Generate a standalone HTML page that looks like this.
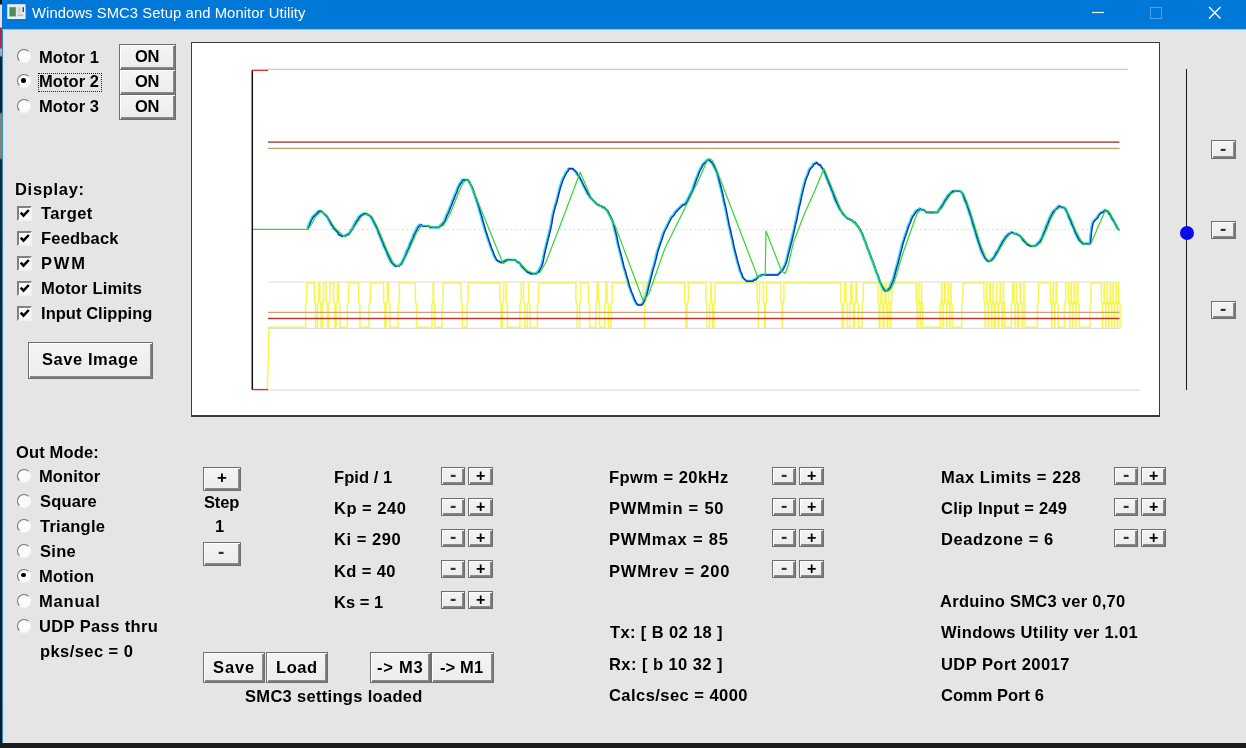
<!DOCTYPE html>
<html><head><meta charset="utf-8"><title>Windows SMC3 Setup and Monitor Utility</title>
<style>
html,body{margin:0;padding:0;}
body{width:1246px;height:748px;overflow:hidden;background:#15171a;position:relative;
 font-family:"Liberation Sans",sans-serif;font-weight:bold;font-size:16px;color:#000;}
.abs{position:absolute;}
#desk{position:absolute;left:0;top:0;width:1246px;height:748px;
 background:linear-gradient(180deg,#101418 0,#101418 4px,#ecdfe2 5px,#ecdfe2 27px,#b02838 28px,#b83040 48px,#b0b0b0 49px,#a0a0a0 56px,#15202a 57px,#15202a 112px,#8a8260 114px,#8a8260 158px,#1a2630 160px,#101820 748px);}
#deskb{position:absolute;left:0;top:743px;width:1246px;height:5px;background:#1b1c1e;}
#win{position:absolute;left:2px;top:0;width:1244px;height:743px;background:#e5e5e5;border-left:1px solid #2a8ae0;box-sizing:border-box;}
#tb{position:absolute;left:2px;top:0;width:1244px;height:29px;background:#0078d7;}
#tbl{position:absolute;left:2px;top:29px;width:1244px;height:1px;background:#7fc4f4;}
#title{position:absolute;will-change:transform;left:32px;top:3px;font-weight:normal;font-size:15.3px;color:#fff;white-space:nowrap;line-height:19px;letter-spacing:-0.05px;}
.t{position:absolute;will-change:transform;white-space:nowrap;line-height:18px;height:18px;font-size:16px;letter-spacing:0px;}
.btn{position:absolute;box-sizing:border-box;border:1px solid #6f6f6f;background:linear-gradient(180deg,#f4f4f4,#ececec);
 box-shadow:inset 1px 1px 0 #ffffff, inset -1px -1px 0 #7a7a7a, inset -2px -2px 0 #8a8a8a;
 text-align:center;white-space:nowrap;}
.btn span{position:relative;display:inline-block;}
.sb{width:25px;height:18px;font-size:13px;line-height:14px;}
.rad{position:absolute;width:14px;height:14px;border-radius:50%;box-sizing:border-box;background:#fbfbfb;
 border:1.8px solid;border-color:#747474 #f6f6f6 #f6f6f6 #747474;}
.rad.on::after{content:"";position:absolute;left:3px;top:3px;width:4.4px;height:4.4px;border-radius:50%;background:#000;}
.chk{position:absolute;width:15px;height:15px;box-sizing:border-box;background:#fafafa;border:2px solid;border-color:#808080 #f2f2f2 #f2f2f2 #808080;}
.chk svg{position:absolute;left:0;top:0;}
#panel{position:absolute;left:191px;top:42px;width:969px;height:375px;box-sizing:border-box;background:#fff;border:1.5px solid #3a3a3a;border-bottom-width:2px;}
.chart{position:absolute;left:192px;top:43px;}
</style></head>
<body>
<div id="desk"></div><div id="deskb"></div>
<div id="win"></div>
<div id="tb"></div><div id="tbl"></div>
<svg class="abs" style="left:7px;top:4px" width="20" height="16" viewBox="0 0 20 16"><rect x="0.9" y="0.9" width="17" height="13.4" fill="#e4e8ea" stroke="#fbfdfd" stroke-width="1.2"/><rect x="2.4" y="3.2" width="6.4" height="9.2" fill="#4f8a5c"/><rect x="10.4" y="3.4" width="3.6" height="5.6" fill="#cfd6dc"/><rect x="15.6" y="3.2" width="1.3" height="4.8" fill="#28304a"/><rect x="10.4" y="10.6" width="5.6" height="1.1" fill="#c8a0a0"/></svg>
<div class="t" style="left:32.30px;top:3.87px;font-size:14.8px;letter-spacing:0.077px;color:#fff;font-weight:normal;">Windows SMC3 Setup and Monitor Utility</div>
<svg class="abs" style="left:1080px;top:0" width="166" height="29" viewBox="1080 0 166 29"><line x1="1092" y1="12.5" x2="1104" y2="12.5" stroke="#fff" stroke-width="1.2"/><rect x="1150.5" y="7.5" width="11" height="11" fill="none" stroke="#4aa0e6" stroke-width="1.1"/><path d="M1209 7 L1220.5 18.5 M1220.5 7 L1209 18.5" stroke="#fff" stroke-width="1.4" fill="none"/></svg>
<div class="rad" style="left:17.2px;top:49.3px"></div>
<div class="t" style="left:38.95px;top:47.88px;font-size:16.5px;letter-spacing:0.047px;">Motor 1</div>
<div class="btn " style="left:119.3px;top:44px;width:56.3px;height:25.6px;font-size:16.5px;line-height:21.6px;"></div>
<div class="t" style="left:134.84px;top:46.68px;font-size:16.5px;letter-spacing:-0.400px;">ON</div>
<div class="rad on" style="left:17.2px;top:74.3px"></div>
<div class="t" style="left:38.95px;top:72.48px;font-size:16.5px;letter-spacing:0.075px;">Motor 2</div>
<div class="btn " style="left:119.3px;top:69px;width:56.3px;height:25.6px;font-size:16.5px;line-height:21.6px;"></div>
<div class="t" style="left:134.84px;top:71.68px;font-size:16.5px;letter-spacing:-0.400px;">ON</div>
<div class="rad" style="left:17.2px;top:99.3px"></div>
<div class="t" style="left:38.95px;top:97.08px;font-size:16.5px;letter-spacing:0.075px;">Motor 3</div>
<div class="btn " style="left:119.3px;top:94px;width:56.3px;height:25.6px;font-size:16.5px;line-height:21.6px;"></div>
<div class="t" style="left:134.84px;top:96.68px;font-size:16.5px;letter-spacing:-0.400px;">ON</div>
<div class="abs" style="left:38px;top:73px;width:63.5px;height:18.5px;border:1px dotted #222;box-sizing:border-box"></div>
<div class="t" style="left:14.85px;top:180.48px;font-size:16.5px;letter-spacing:0.694px;">Display:</div>
<div class="chk" style="left:16.7px;top:206.2px"><svg width="11" height="11" viewBox="0 0 11 11"><path d="M1.7 4.6 L4.5 7.6 L9.8 2.0" fill="none" stroke="#000" stroke-width="2.5"/></svg></div>
<div class="t" style="left:40.94px;top:204.08px;font-size:16.5px;letter-spacing:0.412px;">Target</div>
<div class="chk" style="left:16.7px;top:231.2px"><svg width="11" height="11" viewBox="0 0 11 11"><path d="M1.7 4.6 L4.5 7.6 L9.8 2.0" fill="none" stroke="#000" stroke-width="2.5"/></svg></div>
<div class="t" style="left:40.55px;top:229.08px;font-size:16.5px;letter-spacing:0.189px;">Feedback</div>
<div class="chk" style="left:16.7px;top:256.2px"><svg width="11" height="11" viewBox="0 0 11 11"><path d="M1.7 4.6 L4.5 7.6 L9.8 2.0" fill="none" stroke="#000" stroke-width="2.5"/></svg></div>
<div class="t" style="left:40.55px;top:254.08px;font-size:16.5px;letter-spacing:1.793px;">PWM</div>
<div class="chk" style="left:16.7px;top:281.2px"><svg width="11" height="11" viewBox="0 0 11 11"><path d="M1.7 4.6 L4.5 7.6 L9.8 2.0" fill="none" stroke="#000" stroke-width="2.5"/></svg></div>
<div class="t" style="left:40.55px;top:279.08px;font-size:16.5px;letter-spacing:0.165px;">Motor Limits</div>
<div class="chk" style="left:16.7px;top:306.2px"><svg width="11" height="11" viewBox="0 0 11 11"><path d="M1.7 4.6 L4.5 7.6 L9.8 2.0" fill="none" stroke="#000" stroke-width="2.5"/></svg></div>
<div class="t" style="left:40.55px;top:304.08px;font-size:16.5px;letter-spacing:0.041px;">Input Clipping</div>
<div class="btn " style="left:28px;top:342px;width:125px;height:37px;font-size:16.5px;line-height:33px;"></div>
<div class="t" style="left:41.91px;top:349.88px;font-size:16.5px;letter-spacing:0.560px;">Save Image</div>
<div class="t" style="left:16.04px;top:442.68px;font-size:16.5px;letter-spacing:0.154px;">Out Mode:</div>
<div class="rad" style="left:17.4px;top:468.5px"></div>
<div class="t" style="left:39.05px;top:466.58px;font-size:16.5px;letter-spacing:0.111px;">Monitor</div>
<div class="rad" style="left:17.4px;top:493.5px"></div>
<div class="t" style="left:39.71px;top:491.58px;font-size:16.5px;letter-spacing:0.164px;">Square</div>
<div class="rad" style="left:17.4px;top:518.5px"></div>
<div class="t" style="left:40.04px;top:516.58px;font-size:16.5px;letter-spacing:0.238px;">Triangle</div>
<div class="rad" style="left:17.4px;top:543.5px"></div>
<div class="t" style="left:39.71px;top:541.58px;font-size:16.5px;letter-spacing:0.292px;">Sine</div>
<div class="rad on" style="left:17.4px;top:568.5px"></div>
<div class="t" style="left:39.05px;top:566.58px;font-size:16.5px;letter-spacing:0.225px;">Motion</div>
<div class="rad" style="left:17.4px;top:593.5px"></div>
<div class="t" style="left:39.05px;top:591.58px;font-size:16.5px;letter-spacing:0.797px;">Manual</div>
<div class="rad" style="left:17.4px;top:618.5px"></div>
<div class="t" style="left:39.21px;top:616.58px;font-size:16.5px;letter-spacing:0.386px;">UDP Pass thru</div>
<div class="t" style="left:39.95px;top:642.28px;font-size:16.5px;letter-spacing:0.431px;">pks/sec = 0</div>
<div class="btn " style="left:203.2px;top:467px;width:37.5px;height:24px;font-size:15px;line-height:20px;"><span style="top:-1px"></span></div>
<div class="t" style="left:216.57px;top:469.10px;font-size:17px;color:#000">+</div>
<div class="t" style="left:203.50px;top:492.88px;font-size:16.5px;letter-spacing:-0.183px;">Step</div>
<div class="t" style="left:214.51px;top:517.28px;font-size:16.5px;letter-spacing:0.000px;">1</div>
<div class="btn " style="left:203.2px;top:542.3px;width:37.5px;height:24px;font-size:15px;line-height:20px;"><span style="top:-1px"></span></div>
<div class="t" style="left:218.37px;top:542.86px;font-size:19px;color:#333">-</div>
<div class="t" style="left:333.85px;top:467.98px;font-size:16.5px;letter-spacing:0.057px;">Fpid / 1</div>
<div class="btn " style="left:440.8px;top:467px;width:24.6px;height:18px;font-size:13px;line-height:14px;"><span style="top:-3px"></span></div>
<div class="btn " style="left:468.1px;top:467px;width:24.8px;height:18px;font-size:13px;line-height:14px;"><span style="top:-3px"></span></div>
<div class="t" style="left:449.87px;top:466.26px;font-size:19px;color:#333">-</div>
<div class="t" style="left:475.86px;top:467.32px;font-size:16px;color:#000">+</div>
<div class="t" style="left:333.85px;top:499.23px;font-size:16.5px;letter-spacing:0.515px;">Kp = 240</div>
<div class="btn " style="left:440.8px;top:498px;width:24.6px;height:18px;font-size:13px;line-height:14px;"><span style="top:-3px"></span></div>
<div class="btn " style="left:468.1px;top:498px;width:24.8px;height:18px;font-size:13px;line-height:14px;"><span style="top:-3px"></span></div>
<div class="t" style="left:449.87px;top:497.26px;font-size:19px;color:#333">-</div>
<div class="t" style="left:475.86px;top:498.32px;font-size:16px;color:#000">+</div>
<div class="t" style="left:333.85px;top:530.48px;font-size:16.5px;letter-spacing:0.564px;">Ki = 290</div>
<div class="btn " style="left:440.8px;top:529px;width:24.6px;height:18px;font-size:13px;line-height:14px;"><span style="top:-3px"></span></div>
<div class="btn " style="left:468.1px;top:529px;width:24.8px;height:18px;font-size:13px;line-height:14px;"><span style="top:-3px"></span></div>
<div class="t" style="left:449.87px;top:528.26px;font-size:19px;color:#333">-</div>
<div class="t" style="left:475.86px;top:529.32px;font-size:16px;color:#000">+</div>
<div class="t" style="left:333.85px;top:561.73px;font-size:16.5px;letter-spacing:0.397px;">Kd = 40</div>
<div class="btn " style="left:440.8px;top:560px;width:24.6px;height:18px;font-size:13px;line-height:14px;"><span style="top:-3px"></span></div>
<div class="btn " style="left:468.1px;top:560px;width:24.8px;height:18px;font-size:13px;line-height:14px;"><span style="top:-3px"></span></div>
<div class="t" style="left:449.87px;top:559.26px;font-size:19px;color:#333">-</div>
<div class="t" style="left:475.86px;top:560.32px;font-size:16px;color:#000">+</div>
<div class="t" style="left:333.85px;top:592.98px;font-size:16.5px;letter-spacing:-0.004px;">Ks = 1</div>
<div class="btn " style="left:440.8px;top:591px;width:24.6px;height:18px;font-size:13px;line-height:14px;"><span style="top:-3px"></span></div>
<div class="btn " style="left:468.1px;top:591px;width:24.8px;height:18px;font-size:13px;line-height:14px;"><span style="top:-3px"></span></div>
<div class="t" style="left:449.87px;top:590.26px;font-size:19px;color:#333">-</div>
<div class="t" style="left:475.86px;top:591.32px;font-size:16px;color:#000">+</div>
<div class="t" style="left:608.85px;top:467.98px;font-size:16.5px;letter-spacing:0.458px;">Fpwm = 20kHz</div>
<div class="btn " style="left:771.8px;top:467px;width:24.6px;height:18px;font-size:13px;line-height:14px;"><span style="top:-3px"></span></div>
<div class="btn " style="left:799.1px;top:467px;width:24.8px;height:18px;font-size:13px;line-height:14px;"><span style="top:-3px"></span></div>
<div class="t" style="left:780.87px;top:466.26px;font-size:19px;color:#333">-</div>
<div class="t" style="left:806.86px;top:467.32px;font-size:16px;color:#000">+</div>
<div class="t" style="left:608.85px;top:499.23px;font-size:16.5px;letter-spacing:0.769px;">PWMmin = 50</div>
<div class="btn " style="left:771.8px;top:498px;width:24.6px;height:18px;font-size:13px;line-height:14px;"><span style="top:-3px"></span></div>
<div class="btn " style="left:799.1px;top:498px;width:24.8px;height:18px;font-size:13px;line-height:14px;"><span style="top:-3px"></span></div>
<div class="t" style="left:780.87px;top:497.26px;font-size:19px;color:#333">-</div>
<div class="t" style="left:806.86px;top:498.32px;font-size:16px;color:#000">+</div>
<div class="t" style="left:608.85px;top:530.48px;font-size:16.5px;letter-spacing:0.850px;">PWMmax = 85</div>
<div class="btn " style="left:771.8px;top:529px;width:24.6px;height:18px;font-size:13px;line-height:14px;"><span style="top:-3px"></span></div>
<div class="btn " style="left:799.1px;top:529px;width:24.8px;height:18px;font-size:13px;line-height:14px;"><span style="top:-3px"></span></div>
<div class="t" style="left:780.87px;top:528.26px;font-size:19px;color:#333">-</div>
<div class="t" style="left:806.86px;top:529.32px;font-size:16px;color:#000">+</div>
<div class="t" style="left:608.85px;top:561.73px;font-size:16.5px;letter-spacing:0.816px;">PWMrev = 200</div>
<div class="btn " style="left:771.8px;top:560px;width:24.6px;height:18px;font-size:13px;line-height:14px;"><span style="top:-3px"></span></div>
<div class="btn " style="left:799.1px;top:560px;width:24.8px;height:18px;font-size:13px;line-height:14px;"><span style="top:-3px"></span></div>
<div class="t" style="left:780.87px;top:559.26px;font-size:19px;color:#333">-</div>
<div class="t" style="left:806.86px;top:560.32px;font-size:16px;color:#000">+</div>
<div class="t" style="left:940.75px;top:467.98px;font-size:16.5px;letter-spacing:0.545px;">Max Limits = 228</div>
<div class="btn " style="left:1113.5px;top:467px;width:24.6px;height:18px;font-size:13px;line-height:14px;"><span style="top:-3px"></span></div>
<div class="btn " style="left:1140.8px;top:467px;width:24.8px;height:18px;font-size:13px;line-height:14px;"><span style="top:-3px"></span></div>
<div class="t" style="left:1122.57px;top:466.26px;font-size:19px;color:#333">-</div>
<div class="t" style="left:1148.56px;top:467.32px;font-size:16px;color:#000">+</div>
<div class="t" style="left:941.24px;top:499.23px;font-size:16.5px;letter-spacing:0.233px;">Clip Input = 249</div>
<div class="btn " style="left:1113.5px;top:498px;width:24.6px;height:18px;font-size:13px;line-height:14px;"><span style="top:-3px"></span></div>
<div class="btn " style="left:1140.8px;top:498px;width:24.8px;height:18px;font-size:13px;line-height:14px;"><span style="top:-3px"></span></div>
<div class="t" style="left:1122.57px;top:497.26px;font-size:19px;color:#333">-</div>
<div class="t" style="left:1148.56px;top:498.32px;font-size:16px;color:#000">+</div>
<div class="t" style="left:940.75px;top:530.48px;font-size:16.5px;letter-spacing:0.571px;">Deadzone = 6</div>
<div class="btn " style="left:1113.5px;top:529px;width:24.6px;height:18px;font-size:13px;line-height:14px;"><span style="top:-3px"></span></div>
<div class="btn " style="left:1140.8px;top:529px;width:24.8px;height:18px;font-size:13px;line-height:14px;"><span style="top:-3px"></span></div>
<div class="t" style="left:1122.57px;top:528.26px;font-size:19px;color:#333">-</div>
<div class="t" style="left:1148.56px;top:529.32px;font-size:16px;color:#000">+</div>
<div class="t" style="left:609.84px;top:623.48px;font-size:16.5px;letter-spacing:0.374px;">Tx: [ B 02 18 ]</div>
<div class="t" style="left:608.85px;top:654.88px;font-size:16.5px;letter-spacing:0.445px;">Rx: [ b 10 32 ]</div>
<div class="t" style="left:609.34px;top:686.48px;font-size:16.5px;letter-spacing:0.457px;">Calcs/sec = 4000</div>
<div class="t" style="left:940.40px;top:592.28px;font-size:16.5px;letter-spacing:0.270px;">Arduino SMC3 ver 0,70</div>
<div class="t" style="left:940.90px;top:623.48px;font-size:16.5px;letter-spacing:0.345px;">Windows Utility ver 1.01</div>
<div class="t" style="left:940.91px;top:654.88px;font-size:16.5px;letter-spacing:0.448px;">UDP Port 20017</div>
<div class="t" style="left:941.24px;top:686.48px;font-size:16.5px;letter-spacing:0.022px;">Comm Port 6</div>
<div class="btn " style="left:203px;top:652px;width:62px;height:31px;font-size:16.5px;line-height:27px;"></div>
<div class="t" style="left:213.00px;top:658.28px;font-size:16.5px;letter-spacing:0.882px;">Save</div>
<div class="btn " style="left:265.5px;top:652px;width:62px;height:31px;font-size:16.5px;line-height:27px;"></div>
<div class="t" style="left:276.05px;top:658.28px;font-size:16.5px;letter-spacing:0.570px;">Load</div>
<div class="btn " style="left:369.6px;top:652px;width:61.5px;height:31px;font-size:16.5px;line-height:27px;"></div>
<div class="t" style="left:377.14px;top:658.28px;font-size:16.5px;letter-spacing:0.771px;">-&gt; M3</div>
<div class="btn " style="left:431.3px;top:652px;width:63px;height:31px;font-size:16.5px;line-height:27px;"></div>
<div class="t" style="left:440.34px;top:658.28px;font-size:16.5px;letter-spacing:0.130px;">-&gt; M1</div>
<div class="t" style="left:244.60px;top:686.58px;font-size:16.5px;letter-spacing:0.313px;">SMC3 settings loaded</div>
<div id="panel"></div>
<svg class="chart" width="966" height="372" viewBox="192 43 966 372">
<g stroke="#dcdcdc" stroke-width="1.2" fill="none">
<line x1="268" y1="69.3" x2="1128" y2="69.3" stroke="#c8c8c8"/>
<line x1="268" y1="282" x2="1119.5" y2="282"/>
<line x1="268" y1="328.3" x2="1119.5" y2="328.3"/>
<line x1="268" y1="390.2" x2="1140" y2="390.2"/>
</g>
<line x1="308" y1="229.5" x2="1119.5" y2="229.5" stroke="#d8d8d8" stroke-width="1" stroke-dasharray="1.5 3"/>
<path d="M267.3,389.5 L268.3,360 L269,327.2 L305.6,327.2 L305.6,327.2 L305.6,305.0 L306.8,301.0 L306.8,283.0 L314.4,283.0 L314.4,301.0 L315.6,305.0 L315.6,327.2 L317.4,327.2 L317.4,305.0 L318.6,301.0 L318.6,283.0 L319.9,283.0 L319.9,301.0 L321.1,305.0 L321.1,327.2 L322.4,327.2 L322.4,305.0 L323.6,301.0 L323.6,283.0 L326.1,283.0 L326.1,301.0 L327.4,305.0 L327.4,327.2 L328.6,327.2 L328.6,305.0 L329.9,301.0 L329.9,283.0 L333.6,283.0 L333.6,301.0 L334.9,305.0 L334.9,327.2 L336.1,327.2 L336.1,305.0 L337.4,301.0 L337.4,283.0 L338.6,283.0 L338.6,301.0 L339.9,305.0 L339.9,327.2 L347.4,327.2 L347.4,305.0 L348.6,301.0 L348.6,283.0 L358.6,283.0 L358.6,301.0 L359.9,305.0 L359.9,327.2 L369.1,327.2 L369.1,305.0 L370.4,301.0 L370.4,283.0 L383.6,283.0 L383.6,301.0 L384.9,305.0 L384.9,327.2 L386.1,327.2 L386.1,305.0 L387.4,301.0 L387.4,283.0 L388.6,283.0 L388.6,301.0 L389.9,305.0 L389.9,327.2 L398.1,327.2 L398.1,305.0 L399.4,301.0 L399.4,283.0 L415.4,283.0 L415.4,301.0 L416.6,305.0 L416.6,327.2 L431.9,327.2 L431.9,305.0 L433.1,301.0 L433.1,283.0 L433.6,283.0 L433.6,301.0 L434.9,305.0 L434.9,327.2 L441.9,327.2 L441.9,305.0 L443.1,301.0 L443.1,283.0 L461.1,283.0 L461.1,301.0 L462.4,305.0 L462.4,327.2 L466.9,327.2 L466.9,305.0 L468.1,301.0 L468.1,283.0 L499.9,283.0 L499.9,301.0 L501.1,305.0 L501.1,327.2 L502.4,327.2 L502.4,305.0 L503.6,301.0 L503.6,283.0 L506.1,283.0 L506.1,301.0 L507.4,305.0 L507.4,327.2 L519.9,327.2 L519.9,305.0 L521.1,301.0 L521.1,283.0 L523.6,283.0 L523.6,301.0 L524.9,305.0 L524.9,327.2 L527.4,327.2 L527.4,305.0 L528.6,301.0 L528.6,283.0 L528.6,283.0 L528.6,301.0 L529.9,305.0 L529.9,327.2 L537.4,327.2 L537.4,305.0 L538.6,301.0 L538.6,283.0 L575.9,283.0 L575.9,301.0 L577.1,305.0 L577.1,327.2 L579.6,327.2 L579.6,305.0 L580.9,301.0 L580.9,283.0 L588.4,283.0 L588.4,301.0 L589.6,305.0 L589.6,327.2 L595.9,327.2 L595.9,305.0 L597.1,301.0 L597.1,283.0 L598.4,283.0 L598.4,301.0 L599.6,305.0 L599.6,327.2 L604.6,327.2 L604.6,305.0 L605.9,301.0 L605.9,283.0 L607.1,283.0 L607.1,301.0 L608.4,305.0 L608.4,327.2 L610.9,327.2 L610.9,305.0 L612.1,301.0 L612.1,283.0 L643.4,283.0 L643.4,301.0 L644.6,305.0 L644.6,327.2 L644.6,327.2 L644.6,305.0 L645.9,301.0 L645.9,283.0 L684.6,283.0 L684.6,301.0 L685.9,305.0 L685.9,327.2 L687.1,327.2 L687.1,305.0 L688.4,301.0 L688.4,283.0 L705.9,283.0 L705.9,301.0 L707.1,305.0 L707.1,327.2 L709.6,327.2 L709.6,305.0 L710.9,301.0 L710.9,283.0 L711.4,283.0 L711.4,301.0 L712.6,305.0 L712.6,327.2 L713.9,327.2 L713.9,305.0 L715.1,301.0 L715.1,283.0 L757.1,283.0 L757.1,301.0 L758.4,305.0 L758.4,327.2 L758.4,327.2 L758.4,305.0 L759.6,301.0 L759.6,283.0 L763.4,283.0 L763.4,301.0 L764.6,305.0 L764.6,327.2 L765.4,327.2 L765.4,305.0 L766.6,301.0 L766.6,283.0 L780.9,283.0 L780.9,301.0 L782.1,305.0 L782.1,327.2 L782.6,327.2 L782.6,305.0 L783.9,301.0 L783.9,283.0 L840.9,283.0 L840.9,301.0 L842.1,305.0 L842.1,327.2 L843.4,327.2 L843.4,305.0 L844.6,301.0 L844.6,283.0 L845.9,283.0 L845.9,301.0 L847.1,305.0 L847.1,327.2 L849.6,327.2 L849.6,305.0 L850.9,301.0 L850.9,283.0 L852.1,283.0 L852.1,301.0 L853.4,305.0 L853.4,327.2 L854.6,327.2 L854.6,305.0 L855.9,301.0 L855.9,283.0 L857.1,283.0 L857.1,301.0 L858.4,305.0 L858.4,327.2 L862.1,327.2 L862.1,305.0 L863.4,301.0 L863.4,283.0 L878.0,283.0 L878.0,301.0 L879.2,305.0 L879.2,327.2 L879.9,327.2 L879.9,305.0 L881.1,301.0 L881.1,283.0 L881.9,283.0 L881.9,301.0 L883.1,305.0 L883.1,327.2 L883.9,327.2 L883.9,305.0 L885.1,301.0 L885.1,283.0 L885.9,283.0 L885.9,301.0 L887.1,305.0 L887.1,327.2 L887.9,327.2 L887.9,305.0 L889.1,301.0 L889.1,283.0 L889.1,283.0 L889.1,301.0 L890.3,305.0 L890.3,327.2 L890.7,327.2 L890.7,305.0 L891.9,301.0 L891.9,283.0 L916.1,283.0 L916.1,301.0 L917.3,305.0 L917.3,327.2 L917.7,327.2 L917.7,305.0 L918.9,301.0 L918.9,283.0 L918.9,283.0 L918.9,301.0 L920.1,305.0 L920.1,327.2 L920.4,327.2 L920.4,305.0 L921.6,301.0 L921.6,283.0 L921.4,283.0 L921.4,301.0 L922.6,305.0 L922.6,327.2 L940.4,327.2 L940.4,305.0 L941.6,301.0 L941.6,283.0 L941.9,283.0 L941.9,301.0 L943.1,305.0 L943.1,327.2 L943.4,327.2 L943.4,305.0 L944.6,301.0 L944.6,283.0 L945.4,283.0 L945.4,301.0 L946.6,305.0 L946.6,327.2 L946.9,327.2 L946.9,305.0 L948.1,301.0 L948.1,283.0 L948.4,283.0 L948.4,301.0 L949.6,305.0 L949.6,327.2 L949.9,327.2 L949.9,305.0 L951.1,301.0 L951.1,283.0 L950.9,283.0 L950.9,301.0 L952.1,305.0 L952.1,327.2 L961.7,327.2 L961.7,305.0 L962.9,301.0 L962.9,283.0 L983.9,283.0 L983.9,301.0 L985.1,305.0 L985.1,327.2 L985.4,327.2 L985.4,305.0 L986.6,301.0 L986.6,283.0 L986.9,283.0 L986.9,301.0 L988.1,305.0 L988.1,327.2 L988.4,327.2 L988.4,305.0 L989.6,301.0 L989.6,283.0 L990.4,283.0 L990.4,301.0 L991.6,305.0 L991.6,327.2 L991.9,327.2 L991.9,305.0 L993.1,301.0 L993.1,283.0 L993.4,283.0 L993.4,301.0 L994.6,305.0 L994.6,327.2 L995.4,327.2 L995.4,305.0 L996.6,301.0 L996.6,283.0 L996.9,283.0 L996.9,301.0 L998.1,305.0 L998.1,327.2 L998.9,327.2 L998.9,305.0 L1000.1,301.0 L1000.1,283.0 L1000.9,283.0 L1000.9,301.0 L1002.1,305.0 L1002.1,327.2 L1002.4,327.2 L1002.4,305.0 L1003.6,301.0 L1003.6,283.0 L1003.4,283.0 L1003.4,301.0 L1004.6,305.0 L1004.6,327.2 L1011.4,327.2 L1011.4,305.0 L1012.6,301.0 L1012.6,283.0 L1013.9,283.0 L1013.9,301.0 L1015.1,305.0 L1015.1,327.2 L1015.4,327.2 L1015.4,305.0 L1016.6,301.0 L1016.6,283.0 L1016.4,283.0 L1016.4,301.0 L1017.6,305.0 L1017.6,327.2 L1018.9,327.2 L1018.9,305.0 L1020.1,301.0 L1020.1,283.0 L1020.9,283.0 L1020.9,301.0 L1022.1,305.0 L1022.1,327.2 L1022.9,327.2 L1022.9,305.0 L1024.1,301.0 L1024.1,283.0 L1023.9,283.0 L1023.9,301.0 L1025.1,305.0 L1025.1,327.2 L1037.4,327.2 L1037.4,305.0 L1038.6,301.0 L1038.6,283.0 L1050.4,283.0 L1050.4,301.0 L1051.6,305.0 L1051.6,327.2 L1051.9,327.2 L1051.9,305.0 L1053.1,301.0 L1053.1,283.0 L1053.4,283.0 L1053.4,301.0 L1054.6,305.0 L1054.6,327.2 L1054.9,327.2 L1054.9,305.0 L1056.1,301.0 L1056.1,283.0 L1056.9,283.0 L1056.9,301.0 L1058.1,305.0 L1058.1,327.2 L1064.4,327.2 L1064.4,305.0 L1065.6,301.0 L1065.6,283.0 L1068.4,283.0 L1068.4,301.0 L1069.6,305.0 L1069.6,327.2 L1069.9,327.2 L1069.9,305.0 L1071.1,301.0 L1071.1,283.0 L1071.4,283.0 L1071.4,301.0 L1072.6,305.0 L1072.6,327.2 L1072.9,327.2 L1072.9,305.0 L1074.1,301.0 L1074.1,283.0 L1074.4,283.0 L1074.4,301.0 L1075.6,305.0 L1075.6,327.2 L1075.9,327.2 L1075.9,305.0 L1077.1,301.0 L1077.1,283.0 L1077.9,283.0 L1077.9,301.0 L1079.1,305.0 L1079.1,327.2 L1089.9,327.2 L1089.9,305.0 L1091.1,301.0 L1091.1,283.0 L1101.4,283.0 L1101.4,301.0 L1102.6,305.0 L1102.6,327.2 L1102.9,327.2 L1102.9,305.0 L1104.1,301.0 L1104.1,283.0 L1104.4,283.0 L1104.4,301.0 L1105.6,305.0 L1105.6,327.2 L1105.9,327.2 L1105.9,305.0 L1107.1,301.0 L1107.1,283.0 L1107.4,283.0 L1107.4,301.0 L1108.6,305.0 L1108.6,327.2 L1108.9,327.2 L1108.9,305.0 L1110.1,301.0 L1110.1,283.0 L1110.4,283.0 L1110.4,301.0 L1111.6,305.0 L1111.6,327.2 L1111.9,327.2 L1111.9,305.0 L1113.1,301.0 L1113.1,283.0 L1113.4,283.0 L1113.4,301.0 L1114.6,305.0 L1114.6,327.2 L1114.9,327.2 L1114.9,305.0 L1116.1,301.0 L1116.1,283.0 L1116.4,283.0 L1116.4,301.0 L1117.6,305.0 L1117.6,327.2 L1117.4,327.2 L1117.4,305.0 L1118.6,301.0 L1118.6,283.0 L1118.9,283.0 L1118.9,301.0 L1120.1,305.0 L1120.1,327.2" fill="none" stroke="#f5f530" stroke-width="1.5" stroke-linejoin="round" opacity="0.85"/>
<line x1="268" y1="142.2" x2="1119.5" y2="142.2" stroke="#b06464" stroke-width="1.8"/>
<line x1="268" y1="148.4" x2="1119.5" y2="148.4" stroke="#cc9a5c" stroke-width="1.3"/>
<line x1="268" y1="312.3" x2="1119.5" y2="312.3" stroke="#c89a68" stroke-width="1.3" opacity="0.9"/>
<line x1="268" y1="318.5" x2="1119.5" y2="318.5" stroke="#b02828" stroke-width="1.6" opacity="0.92"/>
<polyline points="307.2,228.4 308.4,225.9 309.7,222.2 310.9,219.7 312.2,217.2 313.4,215.9 314.7,214.7 315.9,213.4 317.2,212.2 318.4,210.9 319.7,210.9 320.9,210.9 322.2,212.2 323.4,213.4 324.7,214.7 325.9,215.9 327.2,217.2 328.4,219.7 329.7,222.2 330.9,224.7 332.2,225.9 333.4,228.4 334.7,229.7 335.9,230.9 337.2,232.2 338.4,234.7 339.7,234.7 340.9,235.9 342.2,235.9 343.4,235.9 344.7,235.9 345.9,234.7 347.2,234.7 348.4,233.4 349.7,232.2 350.9,229.7 352.2,228.4 353.4,225.9 354.7,223.4 355.9,220.9 357.2,219.7 358.4,217.2 359.7,215.9 360.9,214.7 362.2,214.7 363.4,213.4 364.7,213.4 365.9,213.4 367.2,214.7 368.4,214.7 369.7,215.9 370.9,217.2 372.2,219.7 373.4,222.2 374.7,224.7 375.9,227.2 377.2,229.7 378.4,233.4 379.7,235.9 380.9,239.7 382.2,242.2 383.4,245.9 384.7,248.4 385.9,250.9 387.2,254.7 388.4,257.2 389.7,259.7 390.9,262.2 392.2,263.4 393.4,264.7 394.7,265.9 395.9,265.9 397.2,265.9 398.4,265.9 399.7,264.7 400.9,263.4 402.2,260.9 403.4,258.4 404.7,255.9 405.9,252.2 407.2,249.7 408.4,247.2 409.7,243.4 410.9,240.9 412.2,238.4 413.4,234.7 414.7,232.2 415.9,229.7 417.2,227.2 418.4,225.9 419.7,224.7 420.9,224.7 422.2,225.9 423.4,225.9 424.7,225.9 425.9,225.9 427.2,225.9 428.4,225.9 429.7,227.2 430.9,227.2 432.2,227.2 433.4,227.2 434.7,227.2 435.9,227.2 437.2,227.2 438.4,227.2 439.7,225.9 440.9,224.7 442.2,223.4 443.4,222.2 444.7,219.7 445.9,215.9 447.2,213.4 448.4,210.9 449.7,207.2 450.9,204.7 452.2,200.9 453.4,198.4 454.7,194.7 455.9,192.2 457.2,188.4 458.4,185.9 459.7,183.4 460.9,182.2 462.2,179.7 463.4,179.7 464.7,179.7 465.9,179.7 467.2,179.7 468.4,180.9 469.7,183.4 470.9,185.9 472.2,188.4 473.4,192.2 474.7,195.9 475.9,199.7 477.2,203.4 478.4,207.2 479.7,212.2 480.9,215.9 482.2,220.9 483.4,224.7 484.7,229.7 485.9,233.4 487.2,237.2 488.4,240.9 489.7,244.7 490.9,248.4 492.2,250.9 493.4,254.7 494.7,257.2 495.9,259.7 497.2,260.9 498.4,260.9 499.7,262.2 500.9,262.2 502.2,262.2 503.4,260.9 504.7,260.9 505.9,259.7 507.2,259.7 508.4,259.7 509.7,259.7 510.9,259.7 512.2,259.7 513.5,259.7 514.7,259.7 516.0,260.9 517.2,262.2 518.5,262.2 519.7,263.4 521.0,265.9 522.2,267.2 523.5,268.4 524.7,269.7 526.0,270.9 527.2,272.2 528.5,272.2 529.7,273.4 531.0,273.4 532.2,273.4 533.5,273.4 534.7,273.4 536.0,273.4 537.2,272.2 538.5,270.9 539.7,268.4 541.0,265.9 542.2,262.2 543.5,255.9 544.7,249.7 546.0,244.7 547.2,239.7 548.5,234.7 549.7,229.7 551.0,223.4 552.2,215.9 553.5,210.9 554.7,205.9 556.0,202.2 557.2,197.2 558.5,192.2 559.7,187.2 561.0,183.4 562.2,179.7 563.5,177.2 564.7,174.7 566.0,172.2 567.2,170.9 568.5,168.4 569.7,168.4 571.0,168.4 572.2,168.4 573.5,169.7 574.7,170.9 576.0,172.2 577.2,174.7 578.5,175.9 579.7,178.4 581.0,180.9 582.2,183.4 583.5,185.9 584.7,188.4 586.0,190.9 587.2,193.4 588.5,194.7 589.7,197.2 591.0,198.4 592.2,199.7 593.5,200.9 594.7,202.2 596.0,203.4 597.2,204.7 598.5,204.7 599.7,205.9 601.0,205.9 602.2,207.2 603.5,207.2 604.7,208.4 606.0,209.7 607.2,210.9 608.5,213.4 609.7,215.9 611.0,218.4 612.2,220.9 613.5,225.9 614.7,230.9 616.0,235.9 617.2,242.2 618.5,247.2 619.7,252.2 621.0,257.2 622.2,262.2 623.5,267.2 624.7,270.9 626.0,275.9 627.2,279.7 628.5,284.7 629.7,288.4 631.0,292.2 632.2,294.7 633.5,298.4 634.7,300.9 636.0,303.4 637.2,304.7 638.5,304.7 639.7,304.7 641.0,304.7 642.2,303.4 643.5,300.9 644.7,298.4 646.0,294.7 647.2,289.7 648.5,284.7 649.7,279.7 651.0,274.7 652.2,269.7 653.5,265.9 654.7,260.9 656.0,255.9 657.2,250.9 658.5,247.2 659.7,243.4 661.0,239.7 662.2,235.9 663.5,232.2 664.7,229.7 666.0,227.2 667.2,224.7 668.5,222.2 669.7,219.7 671.0,217.2 672.2,215.9 673.5,214.7 674.7,212.2 676.0,210.9 677.2,209.7 678.5,208.4 679.7,207.2 681.0,205.9 682.2,204.7 683.5,204.7 684.7,203.4 686.0,202.2 687.2,199.7 688.5,197.2 689.7,194.7 691.0,192.2 692.2,189.7 693.5,185.9 694.7,182.2 696.0,178.4 697.2,175.9 698.5,172.2 699.7,169.7 701.0,167.2 702.2,164.7 703.5,163.4 704.7,162.2 706.0,160.9 707.2,159.7 708.5,159.7 709.7,160.9 711.0,162.2 712.2,163.4 713.5,165.9 714.7,168.4 716.0,170.9 717.2,174.7 718.5,179.7 719.7,184.7 721.0,189.7 722.2,194.7 723.5,200.9 724.7,205.9 726.0,212.2 727.2,218.4 728.5,224.7 729.7,229.7 731.0,235.9 732.2,240.9 733.5,247.2 734.7,252.2 736.0,257.2 737.2,262.2 738.5,265.9 739.7,270.9 741.0,273.4 742.2,277.2 743.5,278.4 744.7,279.7 746.0,280.9 747.2,280.9 748.5,280.9 749.7,280.9 751.0,280.9 752.2,280.9 753.5,279.7 754.7,279.7 756.0,278.4 757.2,277.2 758.5,275.9 759.7,275.9 761.0,274.7 762.2,274.7 763.5,274.7 764.7,274.7 766.0,274.7 767.2,274.7 768.5,274.7 769.7,274.7 771.0,274.7 772.2,274.7 773.5,274.7 774.7,274.7 776.0,274.7 777.2,274.7 778.5,273.4 779.7,272.2 781.0,270.9 782.2,269.7 783.5,267.2 784.7,264.7 786.0,260.9 787.2,255.9 788.5,250.9 789.7,245.9 791.0,240.9 792.2,235.9 793.5,230.9 794.7,224.7 796.0,219.7 797.2,213.4 798.5,207.2 799.7,202.2 801.0,195.9 802.2,190.9 803.5,185.9 804.7,180.9 806.0,177.2 807.2,174.7 808.5,170.9 809.7,168.4 811.0,167.2 812.2,165.9 813.5,163.4 814.7,163.4 816.0,162.2 817.2,163.4 818.5,164.7 819.7,164.7 821.0,167.2 822.2,168.4 823.5,170.9 824.7,173.4 826.0,177.2 827.2,179.7 828.5,183.4 829.7,185.9 831.0,189.7 832.2,192.2 833.5,195.9 834.7,199.7 836.0,202.2 837.2,204.7 838.5,207.2 839.7,209.7 841.0,210.9 842.2,213.4 843.5,214.7 844.7,215.9 846.0,217.2 847.2,218.4 848.5,218.4 849.7,219.7 851.0,219.7 852.2,220.9 853.5,222.2 854.7,222.2 856.0,224.7 857.2,225.9 858.5,227.2 859.7,229.7 861.0,232.2 862.2,234.7 863.5,238.4 864.7,240.9 866.0,244.7 867.2,248.4 868.5,250.9 869.7,254.7 871.0,258.4 872.2,260.9 873.5,264.7 874.7,268.4 876.0,272.2 877.2,274.7 878.5,278.4 879.7,282.2 881.0,284.7 882.2,287.2 883.5,289.7 884.7,290.9 886.0,290.9 887.2,289.7 888.5,288.4 889.7,287.2 891.0,283.4 892.2,280.9 893.5,277.2 894.7,272.2 896.0,267.2 897.2,263.4 898.5,258.4 899.7,253.4 901.0,248.4 902.2,243.4 903.5,239.7 904.7,235.9 906.0,232.2 907.2,228.4 908.5,224.7 909.7,222.2 911.0,218.4 912.2,215.9 913.5,214.7 914.7,212.2 916.0,210.9 917.2,209.7 918.5,209.7 919.7,208.4 921.0,209.7 922.2,209.7 923.5,209.7 924.7,210.9 926.0,212.2 927.2,212.2 928.5,212.2 929.7,212.2 931.0,212.2 932.2,212.2 933.5,212.2 934.7,212.2 936.0,212.2 937.2,212.2 938.5,209.7 939.7,208.4 941.0,205.9 942.2,204.7 943.5,202.2 944.7,199.7 946.0,198.4 947.2,195.9 948.5,194.7 949.7,193.4 951.0,192.2 952.2,190.9 953.5,190.9 954.7,190.9 956.0,190.9 957.2,190.9 958.5,190.9 959.7,190.9 961.0,192.2 962.2,193.4 963.5,197.2 964.7,200.9 966.0,203.4 967.2,207.2 968.5,210.9 969.7,214.7 971.0,218.4 972.2,223.4 973.5,227.2 974.7,230.9 976.0,235.9 977.2,239.7 978.5,243.4 979.7,247.2 981.0,250.9 982.2,253.4 983.5,255.9 984.7,258.4 986.0,259.7 987.2,260.9 988.5,260.9 989.7,260.9 991.0,259.7 992.2,258.4 993.5,257.2 994.7,254.7 996.0,252.2 997.2,250.9 998.5,248.4 999.7,245.9 1001.0,243.4 1002.2,240.9 1003.5,239.7 1004.7,237.2 1006.0,235.9 1007.2,234.7 1008.5,233.4 1009.7,233.4 1011.0,232.2 1012.2,232.2 1013.5,233.4 1014.7,233.4 1016.0,233.4 1017.2,234.7 1018.5,234.7 1019.7,235.9 1021.0,237.2 1022.2,239.7 1023.5,240.9 1024.7,242.2 1026.0,243.4 1027.2,244.7 1028.5,244.7 1029.7,245.9 1031.0,245.9 1032.2,245.9 1033.5,245.9 1034.7,245.9 1036.0,244.7 1037.2,243.4 1038.5,242.2 1039.7,240.9 1041.0,238.4 1042.2,235.9 1043.5,232.2 1044.7,229.7 1046.0,225.9 1047.2,223.4 1048.5,219.7 1049.7,217.2 1051.0,214.7 1052.2,212.2 1053.5,210.9 1054.7,209.7 1056.0,208.4 1057.2,207.2 1058.5,205.9 1059.7,205.9 1061.0,207.2 1062.2,207.2 1063.5,207.2 1064.7,208.4 1066.0,210.9 1067.2,213.4 1068.5,217.2 1069.7,219.7 1071.0,223.4 1072.2,225.9 1073.5,228.4 1074.7,232.2 1076.0,234.7 1077.2,237.2 1078.5,239.7 1079.7,240.9 1081.0,242.2 1082.2,243.4 1083.5,243.4 1084.7,243.4 1086.0,243.4 1087.2,243.4 1088.5,243.4 1089.7,243.4 1091.0,229.7 1092.2,223.4 1093.5,220.9 1094.7,219.7 1096.0,218.4 1097.2,217.2 1098.5,214.7 1099.7,213.4 1101.0,212.2 1102.2,212.2 1103.5,210.9 1104.7,209.7 1106.0,210.9 1107.2,210.9 1108.5,213.4 1109.7,214.7 1111.0,217.2 1112.2,219.7 1113.5,220.9 1114.7,223.4 1116.0,225.9 1117.2,228.4 1118.5,229.7" fill="none" stroke="#3ee0e8" stroke-width="2.5" stroke-linejoin="round"/>
<polyline points="308.0,228.8 309.2,226.2 310.5,222.5 311.8,220.0 313.0,217.5 314.2,216.2 315.5,215.0 316.8,213.8 318.0,212.5 319.2,211.2 320.5,211.2 321.8,211.2 323.0,212.5 324.2,213.8 325.5,215.0 326.8,216.2 328.0,217.5 329.2,220.0 330.5,222.5 331.8,225.0 333.0,226.2 334.2,228.8 335.5,230.0 336.8,231.2 338.0,232.5 339.2,235.0 340.5,235.0 341.8,236.2 343.0,236.2 344.2,236.2 345.5,236.2 346.8,235.0 348.0,235.0 349.2,233.8 350.5,232.5 351.8,230.0 353.0,228.8 354.2,226.2 355.5,223.8 356.8,221.2 358.0,220.0 359.2,217.5 360.5,216.2 361.8,215.0 363.0,215.0 364.2,213.8 365.5,213.8 366.8,213.8 368.0,215.0 369.2,215.0 370.5,216.2 371.8,217.5 373.0,220.0 374.2,222.5 375.5,225.0 376.8,227.5 378.0,230.0 379.2,233.8 380.5,236.2 381.8,240.0 383.0,242.5 384.2,246.2 385.5,248.8 386.8,251.2 388.0,255.0 389.2,257.5 390.5,260.0 391.8,262.5 393.0,263.8 394.2,265.0 395.5,266.2 396.8,266.2 398.0,266.2 399.2,266.2 400.5,265.0 401.8,263.8 403.0,261.2 404.2,258.8 405.5,256.2 406.8,252.5 408.0,250.0 409.2,247.5 410.5,243.8 411.8,241.2 413.0,238.8 414.2,235.0 415.5,232.5 416.8,230.0 418.0,227.5 419.2,226.2 420.5,225.0 421.8,225.0 423.0,226.2 424.2,226.2 425.5,226.2 426.8,226.2 428.0,226.2 429.2,226.2 430.5,227.5 431.8,227.5 433.0,227.5 434.2,227.5 435.5,227.5 436.8,227.5 438.0,227.5 439.2,227.5 440.5,226.2 441.8,225.0 443.0,223.8 444.2,222.5 445.5,220.0 446.8,216.2 448.0,213.8 449.2,211.2 450.5,207.5 451.8,205.0 453.0,201.2 454.2,198.8 455.5,195.0 456.8,192.5 458.0,188.8 459.2,186.2 460.5,183.8 461.8,182.5 463.0,180.0 464.2,180.0 465.5,180.0 466.8,180.0 468.0,180.0 469.2,181.2 470.5,183.8 471.8,186.2 473.0,188.8 474.2,192.5 475.5,196.2 476.8,200.0 478.0,203.8 479.2,207.5 480.5,212.5 481.8,216.2 483.0,221.2 484.2,225.0 485.5,230.0 486.8,233.8 488.0,237.5 489.2,241.2 490.5,245.0 491.8,248.8 493.0,251.2 494.2,255.0 495.5,257.5 496.8,260.0 498.0,261.2 499.2,261.2 500.5,262.5 501.8,262.5 503.0,262.5 504.2,261.2 505.5,261.2 506.8,260.0 508.0,260.0 509.2,260.0 510.5,260.0 511.8,260.0 513.0,260.0 514.2,260.0 515.5,260.0 516.8,261.2 518.0,262.5 519.2,262.5 520.5,263.8 521.8,266.2 523.0,267.5 524.2,268.8 525.5,270.0 526.8,271.2 528.0,272.5 529.2,272.5 530.5,273.8 531.8,273.8 533.0,273.8 534.2,273.8 535.5,273.8 536.8,273.8 538.0,272.5 539.2,271.2 540.5,268.8 541.8,266.2 543.0,262.5 544.2,256.2 545.5,250.0 546.8,245.0 548.0,240.0 549.2,235.0 550.5,230.0 551.8,223.8 553.0,216.2 554.2,211.2 555.5,206.2 556.8,202.5 558.0,197.5 559.2,192.5 560.5,187.5 561.8,183.8 563.0,180.0 564.2,177.5 565.5,175.0 566.8,172.5 568.0,171.2 569.2,168.8 570.5,168.8 571.8,168.8 573.0,168.8 574.2,170.0 575.5,171.2 576.8,172.5 578.0,175.0 579.2,176.2 580.5,178.8 581.8,181.2 583.0,183.8 584.2,186.2 585.5,188.8 586.8,191.2 588.0,193.8 589.2,195.0 590.5,197.5 591.8,198.8 593.0,200.0 594.2,201.2 595.5,202.5 596.8,203.8 598.0,205.0 599.2,205.0 600.5,206.2 601.8,206.2 603.0,207.5 604.2,207.5 605.5,208.8 606.8,210.0 608.0,211.2 609.2,213.8 610.5,216.2 611.8,218.8 613.0,221.2 614.2,226.2 615.5,231.2 616.8,236.2 618.0,242.5 619.2,247.5 620.5,252.5 621.8,257.5 623.0,262.5 624.2,267.5 625.5,271.2 626.8,276.2 628.0,280.0 629.2,285.0 630.5,288.8 631.8,292.5 633.0,295.0 634.2,298.8 635.5,301.2 636.8,303.8 638.0,305.0 639.2,305.0 640.5,305.0 641.8,305.0 643.0,303.8 644.2,301.2 645.5,298.8 646.8,295.0 648.0,290.0 649.2,285.0 650.5,280.0 651.8,275.0 653.0,270.0 654.2,266.2 655.5,261.2 656.8,256.2 658.0,251.2 659.2,247.5 660.5,243.8 661.8,240.0 663.0,236.2 664.2,232.5 665.5,230.0 666.8,227.5 668.0,225.0 669.2,222.5 670.5,220.0 671.8,217.5 673.0,216.2 674.2,215.0 675.5,212.5 676.8,211.2 678.0,210.0 679.2,208.8 680.5,207.5 681.8,206.2 683.0,205.0 684.2,205.0 685.5,203.8 686.8,202.5 688.0,200.0 689.2,197.5 690.5,195.0 691.8,192.5 693.0,190.0 694.2,186.2 695.5,182.5 696.8,178.8 698.0,176.2 699.2,172.5 700.5,170.0 701.8,167.5 703.0,165.0 704.2,163.8 705.5,162.5 706.8,161.2 708.0,160.0 709.2,160.0 710.5,161.2 711.8,162.5 713.0,163.8 714.2,166.2 715.5,168.8 716.8,171.2 718.0,175.0 719.2,180.0 720.5,185.0 721.8,190.0 723.0,195.0 724.2,201.2 725.5,206.2 726.8,212.5 728.0,218.8 729.2,225.0 730.5,230.0 731.8,236.2 733.0,241.2 734.2,247.5 735.5,252.5 736.8,257.5 738.0,262.5 739.2,266.2 740.5,271.2 741.8,273.8 743.0,277.5 744.2,278.8 745.5,280.0 746.8,281.2 748.0,281.2 749.2,281.2 750.5,281.2 751.8,281.2 753.0,281.2 754.2,280.0 755.5,280.0 756.8,278.8 758.0,277.5 759.2,276.2 760.5,276.2 761.8,275.0 763.0,275.0 764.2,275.0 765.5,275.0 766.8,275.0 768.0,275.0 769.2,275.0 770.5,275.0 771.8,275.0 773.0,275.0 774.2,275.0 775.5,275.0 776.8,275.0 778.0,275.0 779.2,273.8 780.5,272.5 781.8,271.2 783.0,270.0 784.2,267.5 785.5,265.0 786.8,261.2 788.0,256.2 789.2,251.2 790.5,246.2 791.8,241.2 793.0,236.2 794.2,231.2 795.5,225.0 796.8,220.0 798.0,213.8 799.2,207.5 800.5,202.5 801.8,196.2 803.0,191.2 804.2,186.2 805.5,181.2 806.8,177.5 808.0,175.0 809.2,171.2 810.5,168.8 811.8,167.5 813.0,166.2 814.2,163.8 815.5,163.8 816.8,162.5 818.0,163.8 819.2,165.0 820.5,165.0 821.8,167.5 823.0,168.8 824.2,171.2 825.5,173.8 826.8,177.5 828.0,180.0 829.2,183.8 830.5,186.2 831.8,190.0 833.0,192.5 834.2,196.2 835.5,200.0 836.8,202.5 838.0,205.0 839.2,207.5 840.5,210.0 841.8,211.2 843.0,213.8 844.2,215.0 845.5,216.2 846.8,217.5 848.0,218.8 849.2,218.8 850.5,220.0 851.8,220.0 853.0,221.2 854.2,222.5 855.5,222.5 856.8,225.0 858.0,226.2 859.2,227.5 860.5,230.0 861.8,232.5 863.0,235.0 864.2,238.8 865.5,241.2 866.8,245.0 868.0,248.8 869.2,251.2 870.5,255.0 871.8,258.8 873.0,261.2 874.2,265.0 875.5,268.8 876.8,272.5 878.0,275.0 879.2,278.8 880.5,282.5 881.8,285.0 883.0,287.5 884.2,290.0 885.5,291.2 886.8,291.2 888.0,290.0 889.2,288.8 890.5,287.5 891.8,283.8 893.0,281.2 894.2,277.5 895.5,272.5 896.8,267.5 898.0,263.8 899.2,258.8 900.5,253.8 901.8,248.8 903.0,243.8 904.2,240.0 905.5,236.2 906.8,232.5 908.0,228.8 909.2,225.0 910.5,222.5 911.8,218.8 913.0,216.2 914.2,215.0 915.5,212.5 916.8,211.2 918.0,210.0 919.2,210.0 920.5,208.8 921.8,210.0 923.0,210.0 924.2,210.0 925.5,211.2 926.8,212.5 928.0,212.5 929.2,212.5 930.5,212.5 931.8,212.5 933.0,212.5 934.2,212.5 935.5,212.5 936.8,212.5 938.0,212.5 939.2,210.0 940.5,208.8 941.8,206.2 943.0,205.0 944.2,202.5 945.5,200.0 946.8,198.8 948.0,196.2 949.2,195.0 950.5,193.8 951.8,192.5 953.0,191.2 954.2,191.2 955.5,191.2 956.8,191.2 958.0,191.2 959.2,191.2 960.5,191.2 961.8,192.5 963.0,193.8 964.2,197.5 965.5,201.2 966.8,203.8 968.0,207.5 969.2,211.2 970.5,215.0 971.8,218.8 973.0,223.8 974.2,227.5 975.5,231.2 976.8,236.2 978.0,240.0 979.2,243.8 980.5,247.5 981.8,251.2 983.0,253.8 984.2,256.2 985.5,258.8 986.8,260.0 988.0,261.2 989.2,261.2 990.5,261.2 991.8,260.0 993.0,258.8 994.2,257.5 995.5,255.0 996.8,252.5 998.0,251.2 999.2,248.8 1000.5,246.2 1001.8,243.8 1003.0,241.2 1004.2,240.0 1005.5,237.5 1006.8,236.2 1008.0,235.0 1009.2,233.8 1010.5,233.8 1011.8,232.5 1013.0,232.5 1014.2,233.8 1015.5,233.8 1016.8,233.8 1018.0,235.0 1019.2,235.0 1020.5,236.2 1021.8,237.5 1023.0,240.0 1024.2,241.2 1025.5,242.5 1026.8,243.8 1028.0,245.0 1029.2,245.0 1030.5,246.2 1031.8,246.2 1033.0,246.2 1034.2,246.2 1035.5,246.2 1036.8,245.0 1038.0,243.8 1039.2,242.5 1040.5,241.2 1041.8,238.8 1043.0,236.2 1044.2,232.5 1045.5,230.0 1046.8,226.2 1048.0,223.8 1049.2,220.0 1050.5,217.5 1051.8,215.0 1053.0,212.5 1054.2,211.2 1055.5,210.0 1056.8,208.8 1058.0,207.5 1059.2,206.2 1060.5,206.2 1061.8,207.5 1063.0,207.5 1064.2,207.5 1065.5,208.8 1066.8,211.2 1068.0,213.8 1069.2,217.5 1070.5,220.0 1071.8,223.8 1073.0,226.2 1074.2,228.8 1075.5,232.5 1076.8,235.0 1078.0,237.5 1079.2,240.0 1080.5,241.2 1081.8,242.5 1083.0,243.8 1084.2,243.8 1085.5,243.8 1086.8,243.8 1088.0,243.8 1089.2,243.8 1090.5,243.8 1091.8,230.0 1093.0,223.8 1094.2,221.2 1095.5,220.0 1096.8,218.8 1098.0,217.5 1099.2,215.0 1100.5,213.8 1101.8,212.5 1103.0,212.5 1104.2,211.2 1105.5,210.0 1106.8,211.2 1108.0,211.2 1109.2,213.8 1110.5,215.0 1111.8,217.5 1113.0,220.0 1114.2,221.2 1115.5,223.8 1116.8,226.2 1118.0,228.8 1119.2,230.0" fill="none" stroke="#1030c8" stroke-width="1.4" stroke-linejoin="round"/>
<polyline points="253.0,229.3 308.0,229.3 312.0,223.5 316.0,216.0 321.5,211.5 327.0,215.5 335.0,228.0 344.0,236.5 349.0,235.0 357.0,223.0 362.0,216.0 366.5,214.0 371.5,216.0 377.0,226.0 387.0,250.0 393.0,262.5 397.8,266.5 402.0,264.5 409.0,250.0 416.0,234.0 421.5,225.5 427.0,226.0 436.5,228.0 443.5,225.5 450.0,214.0 458.0,194.0 463.0,183.0 466.5,179.8 469.5,181.0 503.0,263.5 508.0,260.5 514.0,259.8 519.0,262.0 527.0,270.5 535.5,274.2 540.0,272.5 546.0,262.0 559.0,228.5 580.2,172.2 591.5,198.5 598.0,204.5 606.5,209.8 615.2,226.0 642.8,299.8 645.0,299.0 649.0,293.5 664.9,248.4 689.0,199.8 700.0,177.0 706.0,163.0 709.0,158.5 712.0,160.0 715.2,166.0 757.8,277.2 761.0,276.0 765.2,274.8 766.0,231.0 781.5,271.0 785.2,273.5 788.0,266.0 793.5,242.0 804.2,214.2 814.9,190.6 824.0,168.5 841.5,211.0 846.5,217.2 853.0,221.0 859.0,227.2 864.0,238.0 870.0,253.5 876.0,270.0 881.0,283.0 886.2,291.5 890.0,290.0 894.0,283.0 903.0,253.0 917.0,213.5 920.5,209.5 924.0,210.5 928.8,212.8 933.0,213.0 937.5,212.2 942.0,208.0 946.0,201.0 951.0,194.0 956.0,191.0 960.0,191.0 963.5,193.5 967.0,202.0 971.0,213.5 976.0,230.0 981.0,246.0 986.0,258.0 989.8,261.8 993.0,260.0 996.0,256.0 1001.0,247.0 1006.0,238.5 1010.0,234.0 1013.5,233.0 1017.0,234.0 1021.0,236.0 1027.0,243.0 1033.5,246.8 1037.0,245.5 1041.0,242.2 1046.0,231.0 1051.0,218.5 1056.0,210.0 1061.0,206.8 1063.5,207.0 1066.0,208.5 1071.0,219.0 1076.0,231.0 1081.0,240.5 1084.8,244.2 1088.0,244.0 1091.0,243.5 1105.0,211.0 1107.5,210.5 1110.0,213.0 1113.0,218.5 1116.5,225.0 1119.5,231.0" fill="none" stroke="#30d830" stroke-width="1.2" stroke-linejoin="round"/>
<line x1="252.3" y1="70" x2="252.3" y2="390" stroke="#101010" stroke-width="1.5"/>
<line x1="252" y1="70.3" x2="268" y2="70.3" stroke="#e03030" stroke-width="1.4"/>
<line x1="252" y1="389.6" x2="268" y2="389.6" stroke="#d03030" stroke-width="1.4"/>
</svg>
<div class="abs" style="left:1185.9px;top:69px;width:1.4px;height:321px;background:#1a1a1a"></div>
<div class="abs" style="left:1179.8px;top:226.2px;width:14px;height:14px;border-radius:50%;background:#0a0af0"></div>
<div class="btn " style="left:1211px;top:140.4px;width:24.8px;height:18.6px;font-size:13px;line-height:14.6px;"><span style="top:-2px"></span></div>
<div class="t" style="left:1220.27px;top:139.76px;font-size:19px;color:#333">-</div>
<div class="btn " style="left:1211px;top:220.6px;width:24.8px;height:18.6px;font-size:13px;line-height:14.6px;"><span style="top:-2px"></span></div>
<div class="t" style="left:1220.27px;top:219.96px;font-size:19px;color:#333">-</div>
<div class="btn " style="left:1211px;top:300.7px;width:24.8px;height:18.6px;font-size:13px;line-height:14.6px;"><span style="top:-2px"></span></div>
<div class="t" style="left:1220.27px;top:300.06px;font-size:19px;color:#333">-</div>
</body></html>
